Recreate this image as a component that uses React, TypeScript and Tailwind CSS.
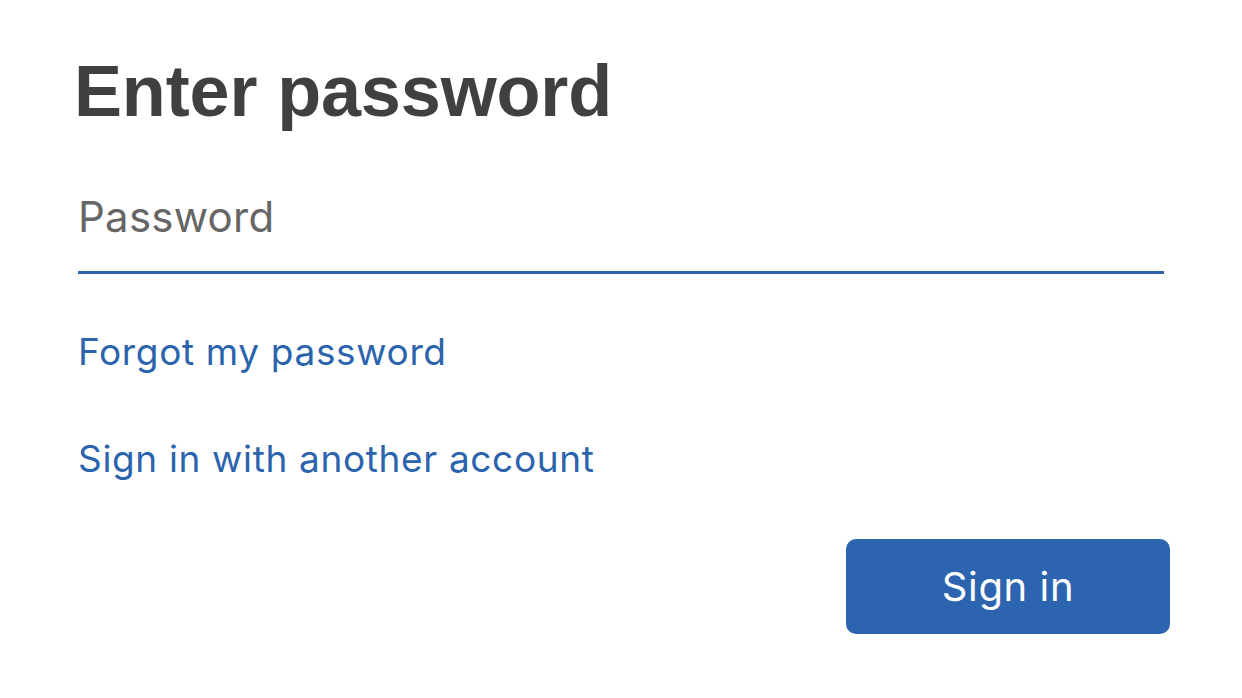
import React from "react";

export default function App() {
  return (
    <div className="w-[1242px] h-[698px] bg-white overflow-hidden">
      <div className="flex flex-col pl-[78px] pr-[78px]">
        <h1
          className="mt-[55px] ml-[-4px] text-[72px] leading-none font-bold text-[#404040] tracking-[-0.15px]"
          style={{ fontFamily: '"Liberation Sans", Arial, sans-serif' }}
        >
          Enter password
        </h1>
        <div
          className="mt-[69px] pb-[33px] border-b-[3px] border-[#2e63a9] text-[42px] leading-none text-[#666666] tracking-[0.25px]"
          style={{ fontFamily: 'Inter, "Noto Sans", sans-serif' }}
        >
          Password
        </div>
        <div
          className="flex flex-col items-start text-[37px] leading-none text-[#2b64ad] tracking-[0.65px]"
          style={{ fontFamily: 'Inter, "Noto Sans", sans-serif' }}
        >
          <a className="mt-[59px]">Forgot my password</a>
          <a className="mt-[70px]">Sign in with another account</a>
        </div>
      </div>
      <div className="flex justify-end pr-[72px] mt-[62px]">
        <button
          className="w-[324px] h-[95px] rounded-[10px] bg-[#2c64b0] text-white text-[40px] leading-none tracking-[0.6px]"
          style={{ fontFamily: 'Inter, "Noto Sans", sans-serif' }}
        >
          Sign in
        </button>
      </div>
    </div>
  );
}
